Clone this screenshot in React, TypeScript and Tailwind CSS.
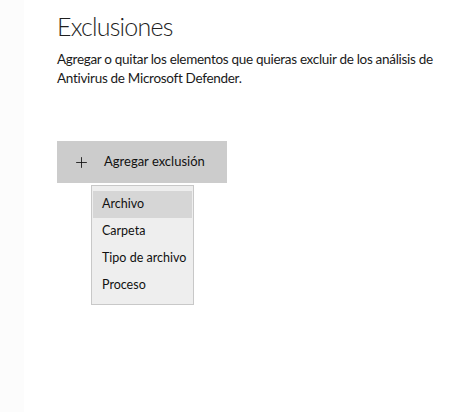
import { Plus } from "lucide-react";

const items = ["Archivo", "Carpeta", "Tipo de archivo", "Proceso"];

export default function App() {
  return (
    <div className="flex h-[412px] w-[460px] bg-white font-['Lato',sans-serif] text-[#1a1a1a]">
      <div className="w-6 shrink-0 bg-[#fcfcfc]" />
      <div className="flex flex-col pl-[33px] pt-[7px]">
        <h1 className="text-[25px] font-light leading-[38px] tracking-[-0.8px] text-[#1f1f1f]">Exclusiones</h1>
        <p className="mt-[5px] w-[400px] text-[13.5px] leading-[19px] tracking-[-0.3px]">
          Agregar o quitar los elementos que quieras excluir de los análisis de Antivirus de Microsoft Defender.
        </p>
        <div className="relative mt-[53px]">
          <button className="flex h-[42px] w-[170px] items-center bg-[#cccccc] pl-[16px] text-[13px] text-[#111]">
            <Plus size={17} strokeWidth={1.2} />
            <span className="ml-[14px] whitespace-nowrap">Agregar exclusión</span>
          </button>
          <div className="absolute left-[34px] top-[44px] w-[103px] border border-[#c8c8c8] bg-[#eeeeee] py-[5px]">
            {items.map((it, i) => (
              <div
                key={it}
                className={`mx-[1px] flex h-[27px] items-center whitespace-nowrap pl-[9px] text-[12.5px] text-[#111] ${i === 0 ? "bg-[#d6d6d6]" : ""}`}
              >
                {it}
              </div>
            ))}
          </div>
        </div>
      </div>
    </div>
  );
}
